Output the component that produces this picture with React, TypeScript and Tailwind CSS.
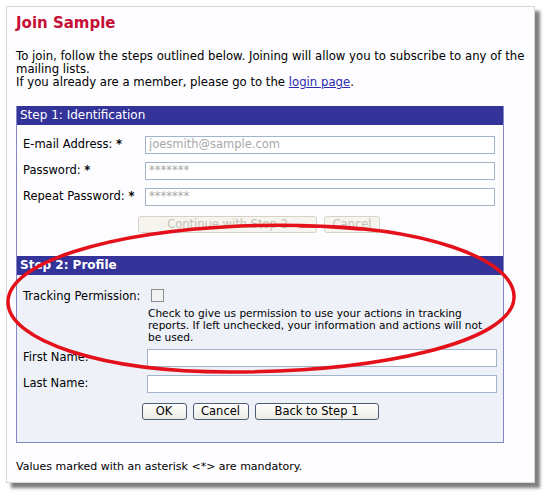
import React from "react";

const font = { fontFamily: '"DejaVu Sans", Verdana, sans-serif' };

function TextBox({ value, placeholder, dim }: { value?: string; placeholder?: string; dim?: boolean }) {
  return (
    <div
      className={`h-[18px] border border-[#a3b3c9] bg-white px-[3px] flex items-center text-[11.5px] leading-none ${
        dim ? "text-[#a8a8a8]" : "text-black"
      }`}
    >
      {value ?? placeholder ?? ""}
    </div>
  );
}

function Btn({ children, disabled, w }: { children: React.ReactNode; disabled?: boolean; w: string }) {
  return (
    <button
      type="button"
      className={`${w} h-[17px] rounded-[3px] text-[11.5px] leading-none flex items-center justify-center ${
        disabled
          ? "border border-[#d6d3c6] bg-[#f5f4ef] text-[#c4c1b4]"
          : "border border-[#4e5d76] bg-gradient-to-b from-white to-[#ebeae4] text-black"
      }`}
    >
      {children}
    </button>
  );
}

export default function App() {
  return (
    <div className="w-[550px] h-[495px] bg-white pt-[6px] pl-[6px] relative overflow-hidden" style={font}>
      <div className="w-[529px] h-[477px] border border-[#d6d6d6] bg-[#fdfcff] shadow-[5px_5px_3px_rgba(0,0,0,0.5)] pl-[9px] pt-[6px] text-[11px] text-black">
        <h1 className="h-[20px] leading-[20px] text-[15px] font-bold text-[#c51036]">Join Sample</h1>

        <p className="mt-[17px] leading-[13px] w-[518px] text-[11.7px]">
          To join, follow the steps outlined below. Joining will allow you to subscribe to any of the mailing lists.
          <br />
          If you already are a member, please go to the{" "}
          <a href="#" className="text-[#2b2bb0] underline">
            login page
          </a>
          .
        </p>

        <div className="mt-[17px] w-[488px] h-[337px] border border-[#8686c4] border-t-0 flex flex-col">
          <div className="h-[19px] bg-[#333399] text-white text-[12px] leading-[19px] pl-[3px]">
            Step 1: Identification
          </div>
          <div className="h-[131px] bg-[#fdfcff] pt-[11px] pl-[6px] pr-[8px]">
            <div className="grid grid-cols-[122px_1fr] gap-y-[8px] items-center text-[11.5px]">
              <span>
                E-mail Address: <b>*</b>
              </span>
              <TextBox placeholder="joesmith@sample.com" dim />
              <span>
                Password: <b>*</b>
              </span>
              <TextBox placeholder="*******" dim />
              <span>
                Repeat Password: <b>*</b>
              </span>
              <TextBox placeholder="*******" dim />
            </div>
            <div className="mt-[10px] flex justify-center gap-[7px]">
              <Btn disabled w="w-[179px]">
                Continue with Step 2
              </Btn>
              <Btn disabled w="w-[56px]">
                Cancel
              </Btn>
            </div>
          </div>

          <div className="h-[19px] bg-[#333399] text-white text-[12px] font-bold leading-[19px] pl-[3px]">
            Step 2: Profile
          </div>
          <div className="flex-1 bg-[#eef1f8] pt-[12px] pl-[6px] pr-[6px]">
            <div className="grid grid-cols-[124px_1fr] items-start text-[11.5px]">
              <span className="leading-[16px] pt-[1px]">Tracking Permission:</span>
              <div>
                <div className="ml-[4px] mt-[2px] w-[13px] h-[13px] border border-[#8c8c8c] bg-[#f2f2f2]" />
                <p className="mt-[5px] ml-[1px] text-[10.6px] leading-[12px] w-[345px]">
                  Check to give us permission to use your actions in tracking reports. If left unchecked, your
                  information and actions will not be used.
                </p>
              </div>
              <span className="mt-[6px] self-center">First Name:</span>
              <div className="mt-[6px]">
                <TextBox />
              </div>
              <span className="mt-[8px] self-center">Last Name:</span>
              <div className="mt-[8px]">
                <TextBox />
              </div>
            </div>
            <div className="mt-[10px] flex justify-center gap-[6px]">
              <Btn w="w-[45px]">OK</Btn>
              <Btn w="w-[56px]">Cancel</Btn>
              <Btn w="w-[124px]">Back to Step 1</Btn>
            </div>
          </div>
        </div>

        <p className="mt-[17px] leading-[13px]">Values marked with an asterisk &lt;*&gt; are mandatory.</p>
      </div>

      <svg className="absolute left-0 top-0 pointer-events-none" width="550" height="495" viewBox="0 0 550 495">
        <path
          d="M300 226 C 420 226, 516 258, 514 298 C 512 342, 380 372, 230 372 C 100 372, 8 340, 8 302 C 8 262, 110 232, 240 226 C 290 224, 330 226, 360 229"
          fill="none"
          stroke="#e4101a"
          strokeWidth="3.5"
          strokeLinecap="round"
        />
      </svg>
    </div>
  );
}
